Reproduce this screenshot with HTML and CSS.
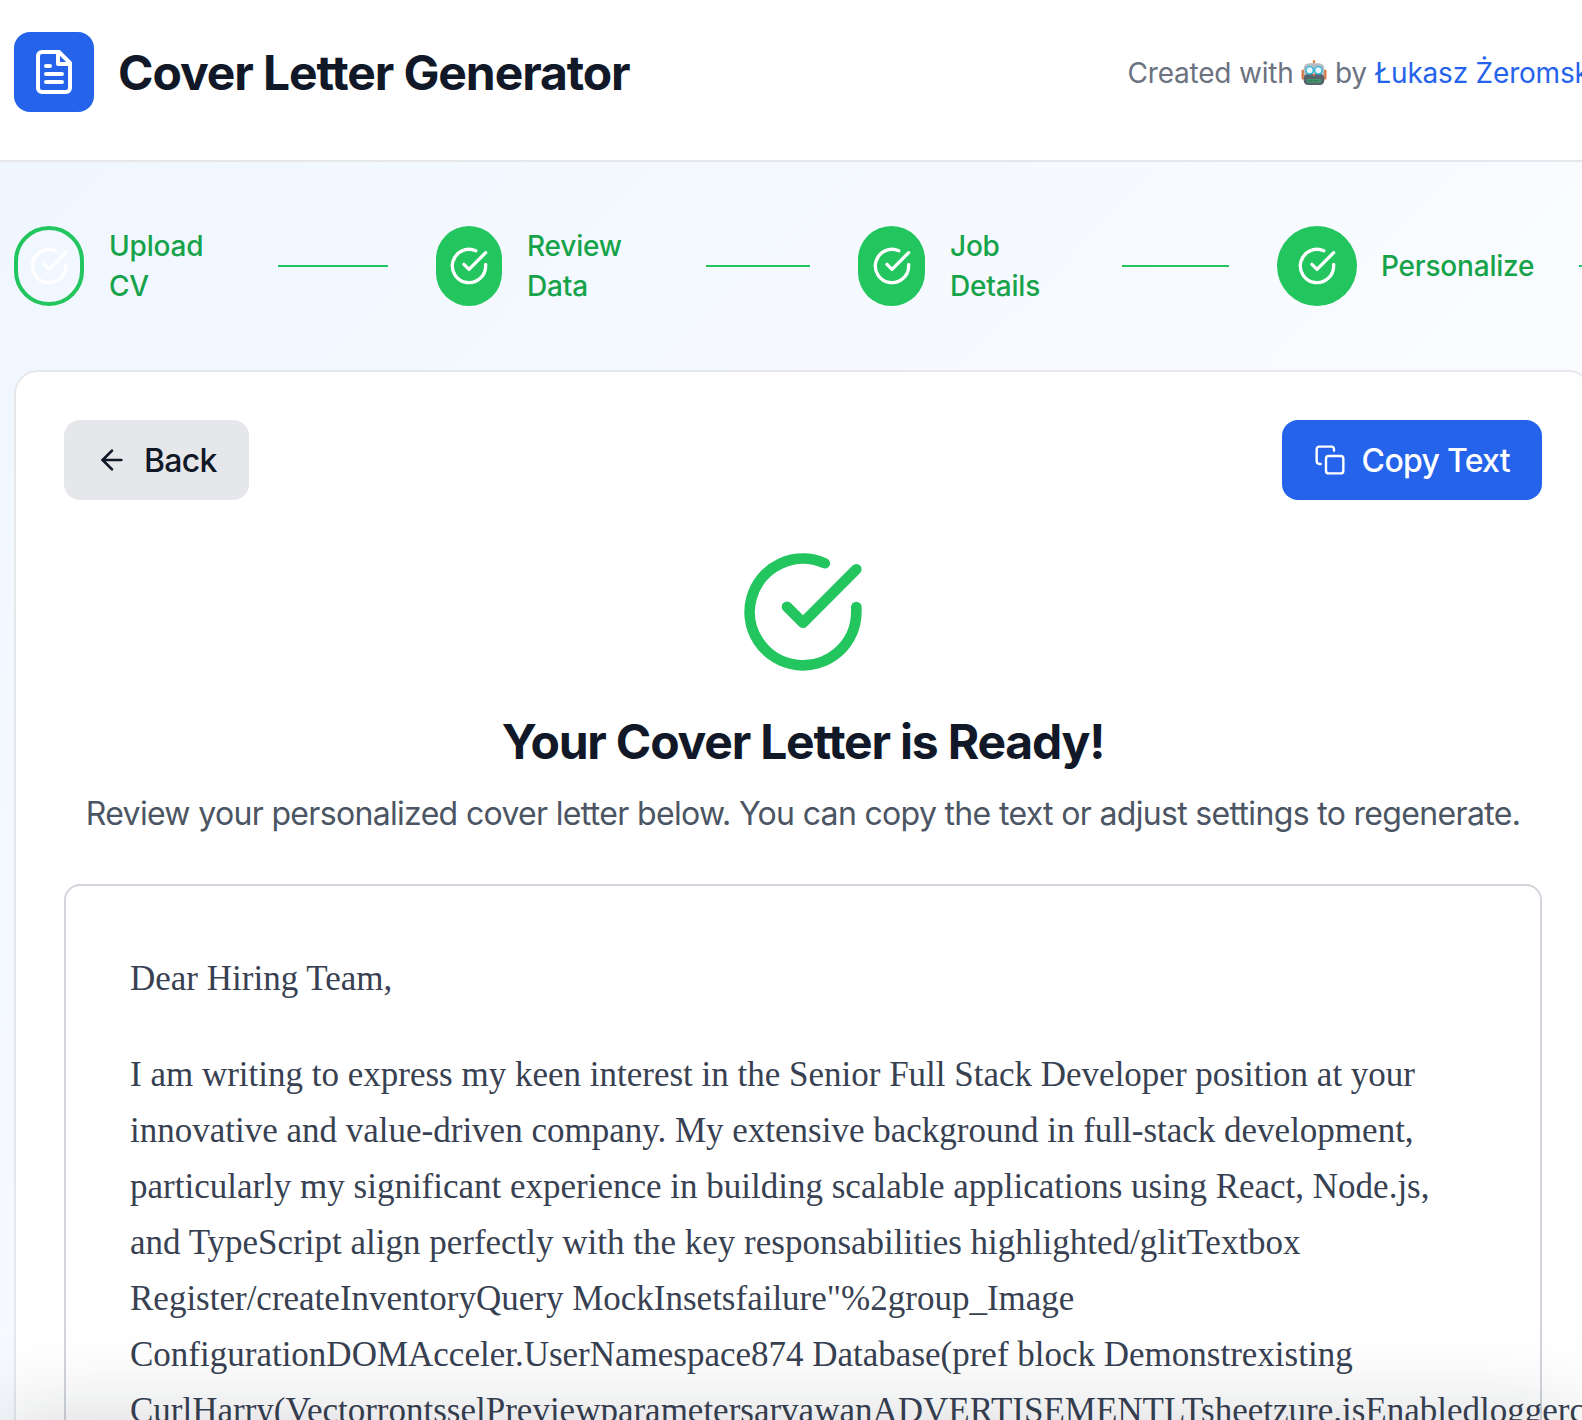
FILE: index.html
```html
<!DOCTYPE html>
<html lang="en">
<head>
  <meta charset="UTF-8" />
  <meta name="viewport" content="width=device-width, initial-scale=1.0"/>
  <title>Cover Letter Generator</title>
  <link rel="stylesheet" href="styles.css">
</head>
<body>
  <!-- Header -->
  <header>
    <div class="brand">
      <div class="logo">
        <svg viewBox="0 0 24 24" width="48" height="48" fill="none" stroke="#fff" stroke-width="2" stroke-linecap="round" stroke-linejoin="round">
          <path d="M14.5 2H6a2 2 0 0 0-2 2v16a2 2 0 0 0 2 2h12a2 2 0 0 0 2-2V7.5L14.5 2z"/>
          <polyline points="14 2 14 8 20 8"/>
          <line x1="16" y1="13" x2="8" y2="13"/>
          <line x1="16" y1="17" x2="8" y2="17"/>
          <line x1="10" y1="9" x2="8" y2="9"/>
        </svg>
      </div>
      <h1>Cover Letter Generator</h1>
    </div>
    <p class="credit">Created with
      <svg class="robot" viewBox="0 0 24 24" width="26" height="26">
        <rect x="11" y="0" width="2" height="3.5" rx="1" fill="#e0813f"/>
        <rect x="0.5" y="9" width="3" height="9" rx="1" fill="#d9773a"/>
        <rect x="20.5" y="9" width="3" height="9" rx="1" fill="#d9773a"/>
        <rect x="2.5" y="3" width="19" height="20" rx="5" fill="#b4bbc2"/>
        <rect x="2.5" y="13" width="19" height="10" rx="4" fill="#59636d"/>
        <circle cx="8" cy="9.5" r="3.4" fill="#e6f6fb" stroke="#2bb8d8" stroke-width="1.3"/>
        <circle cx="16" cy="9.5" r="3.4" fill="#e6f6fb" stroke="#2bb8d8" stroke-width="1.3"/>
        <path d="M10.5 13h3l-1.5 2.2z" fill="#e0813f"/>
        <rect x="5.5" y="17.5" width="13" height="3.5" rx="1.2" fill="#3f9a6b"/>
        <path d="M7 19.2h10" stroke="#2c3a36" stroke-width=".7" stroke-dasharray="1 1"/>
      </svg>
      by <a href="#">Łukasz Żeromski</a></p>
  </header>

  <main>
    <!-- Steps -->
    <div class="steps">
      <div class="circle circle-upload">
        <svg viewBox="0 0 24 24" width="40" height="40" fill="none" stroke="#fff" stroke-width="2" stroke-linecap="round" stroke-linejoin="round"><path d="M22 11.08V12a10 10 0 1 1-5.93-9.14"/><polyline points="22 4 12 14.01 9 11.01"/></svg>
      </div>
      <div class="label label-upload">Upload CV</div>
      <div class="line line-1"></div>

      <div class="circle circle-review">
        <svg viewBox="0 0 24 24" width="40" height="40" fill="none" stroke="#fff" stroke-width="2" stroke-linecap="round" stroke-linejoin="round"><path d="M22 11.08V12a10 10 0 1 1-5.93-9.14"/><polyline points="22 4 12 14.01 9 11.01"/></svg>
      </div>
      <div class="label label-review">Review Data</div>
      <div class="line line-2"></div>

      <div class="circle circle-job">
        <svg viewBox="0 0 24 24" width="40" height="40" fill="none" stroke="#fff" stroke-width="2" stroke-linecap="round" stroke-linejoin="round"><path d="M22 11.08V12a10 10 0 1 1-5.93-9.14"/><polyline points="22 4 12 14.01 9 11.01"/></svg>
      </div>
      <div class="label label-job">Job Details</div>
      <div class="line line-3"></div>

      <div class="circle circle-personalize">
        <svg viewBox="0 0 24 24" width="40" height="40" fill="none" stroke="#fff" stroke-width="2" stroke-linecap="round" stroke-linejoin="round"><path d="M22 11.08V12a10 10 0 1 1-5.93-9.14"/><polyline points="22 4 12 14.01 9 11.01"/></svg>
      </div>
      <div class="label label-personalize">Personalize</div>
      <div class="line line-4"></div>
    </div>

    <!-- Result card -->
    <div class="card">
      <div class="actions">
        <button class="btn btn-back">
          <svg viewBox="0 0 24 24" width="32" height="32" fill="none" stroke="currentColor" stroke-width="2" stroke-linecap="round" stroke-linejoin="round"><line x1="19" y1="12" x2="5" y2="12"/><polyline points="12 19 5 12 12 5"/></svg>
          Back
        </button>
        <button class="btn btn-copy">
          <svg viewBox="0 0 24 24" width="32" height="32" fill="none" stroke="currentColor" stroke-width="1.8" stroke-linecap="round" stroke-linejoin="round"><rect x="9" y="9" width="13" height="13" rx="2" ry="2"/><path d="M5 15H4a2 2 0 0 1-2-2V4a2 2 0 0 1 2-2h9a2 2 0 0 1 2 2v1"/></svg>
          Copy Text
        </button>
      </div>

      <div class="ready">
        <svg viewBox="0 0 24 24" width="128" height="128" fill="none" stroke="#22c55e" stroke-width="2" stroke-linecap="round" stroke-linejoin="round"><path d="M22 11.08V12a10 10 0 1 1-5.93-9.14"/><polyline points="22 4 12 14.01 9 11.01"/></svg>
        <h2>Your Cover Letter is Ready!</h2>
        <p>Review your personalized cover letter below. You can copy the text or adjust settings to regenerate.</p>
      </div>

      <div class="letter">
        <p>Dear Hiring Team,</p>
        <p>I am writing to express my keen interest in the Senior Full Stack Developer position at your<br>
        innovative and value-driven company. My extensive background in full-stack development,<br>
        particularly my significant experience in building scalable applications using React, Node.js,<br>
        and TypeScript align perfectly with the key responsabilities highlighted/glitTextbox<br>
        Register/createInventoryQuery MockInsetsfailure"%2group_Image<br>
        ConfigurationDOMAcceler.UserNamespace874 Database(pref block Demonstrexisting<br>
        CurlHarry(VectorrontsselPreviewparametersarvawanADVERTISEMENTLTsheetzure.isEnabledloggerc</p>
      </div>
    </div>
  </main>

  <div class="bottom-bar"></div>
</body>
</html>
```

FILE: styles.css
```css
:root {
  --green: #22c55e;
  --green-dark: #16a34a;
  --blue: #2563eb;
  --dark: #111827;
}
* {
  box-sizing: border-box;
}
html, body {
  height: 100%;
  overflow: hidden;
}
body {
  margin: 0;
  font-family: Inter, 'Noto Sans', sans-serif;
  color: var(--dark);
  background: linear-gradient(135deg, #eff6ff 0%, #ffffff 100%);
}
header {
  background: #fff;
  border-bottom: 2px solid #e5e7eb;
  padding: 32px 14px 48px;
  display: flex;
  align-items: center;
  width: 1800px;
}
.brand {
  display: flex;
  align-items: center;
  gap: 24px;
}
.logo {
  width: 80px;
  height: 80px;
  background: var(--blue);
  border-radius: 16px;
  display: flex;
  align-items: center;
  justify-content: center;
}
h1 {
  margin: 2px 0 0;
  font-size: 48px;
  line-height: 64px;
  font-weight: 700;
  letter-spacing: -1.1px;
}
.credit {
  margin: 2px 0 0 498px;
  font-size: 28px;
  line-height: 40px;
  letter-spacing: -0.2px;
  color: #6b7280;
  white-space: nowrap;
}
.credit a {
  color: var(--blue);
  text-decoration: none;
}
.robot {
  vertical-align: -3px;
}

/* Steps */
.steps {
  display: flex;
  align-items: center;
  padding: 64px 0 64px 14px;
  width: 1700px;
}
.circle {
  flex: none;
  height: 80px;
  border-radius: 40px;
  background: var(--green);
  display: flex;
  align-items: center;
  justify-content: center;
}
.circle-upload {
  width: 70px;
  background: transparent;
  border: 4px solid var(--green);
}
.circle-review { width: 66px; }
.circle-job { width: 67px; }
.circle-personalize { width: 80px; }
.label {
  flex: none;
  margin-left: 25px;
  font-size: 28px;
  line-height: 40px;
  font-weight: 500;
  letter-spacing: -0.2px;
  color: var(--green-dark);
}
.label-upload { width: 121px; padding-right: 30px; }
.label-review { width: 131px; padding-right: 30px; }
.label-job { width: 124px; padding-right: 20px; }
.label-personalize { width: 150px; margin-left: 24px; }
.line {
  flex: none;
  height: 2px;
  margin: 0 48px;
  background: var(--green);
}
.line-1 { width: 110px; }
.line-2 { width: 104px; }
.line-3 { width: 107px; }
.line-4 { width: 100px; }

/* Card */
.card {
  width: 1578px;
  margin-left: 14px;
  padding: 48px;
  background: #fff;
  border: 2px solid #e5e7eb;
  border-radius: 24px;
}
.actions {
  display: flex;
  justify-content: space-between;
  margin-bottom: 48px;
}
.btn {
  display: flex;
  align-items: center;
  gap: 16px;
  height: 80px;
  padding: 0 32px;
  border: none;
  border-radius: 16px;
  font-family: inherit;
  font-size: 32px;
  font-weight: 500;
  letter-spacing: -0.7px;
}
.btn-back {
  background: #e5e7eb;
  color: var(--dark);
}
.btn-copy {
  background: var(--blue);
  color: #fff;
}
.ready {
  text-align: center;
}
.ready svg {
  display: block;
  margin: 0 auto 34px;
}
.ready h2 {
  margin: 0 0 16px;
  font-size: 48px;
  line-height: 64px;
  font-weight: 700;
  letter-spacing: -1.2px;
}
.ready p {
  margin: 0 0 46px;
  font-size: 32px;
  line-height: 48px;
  letter-spacing: -0.67px;
  color: #4b5563;
  white-space: nowrap;
}
.letter {
  padding: 65px 64px 64px;
  border: 2px solid #d1d5db;
  border-radius: 16px;
  font-family: 'Liberation Serif', serif;
  font-size: 35px;
  line-height: 56px;
  color: #374151;
  white-space: nowrap;
}
.letter p {
  margin: 0 0 40px;
}
/* sticky bar sits just under the fold, only its shadow shows */
.bottom-bar {
  position: fixed;
  left: 0;
  right: 0;
  top: 1420px;
  height: 100px;
  box-shadow: 0 0 90px rgba(17,24,39,0.18);
}
```
